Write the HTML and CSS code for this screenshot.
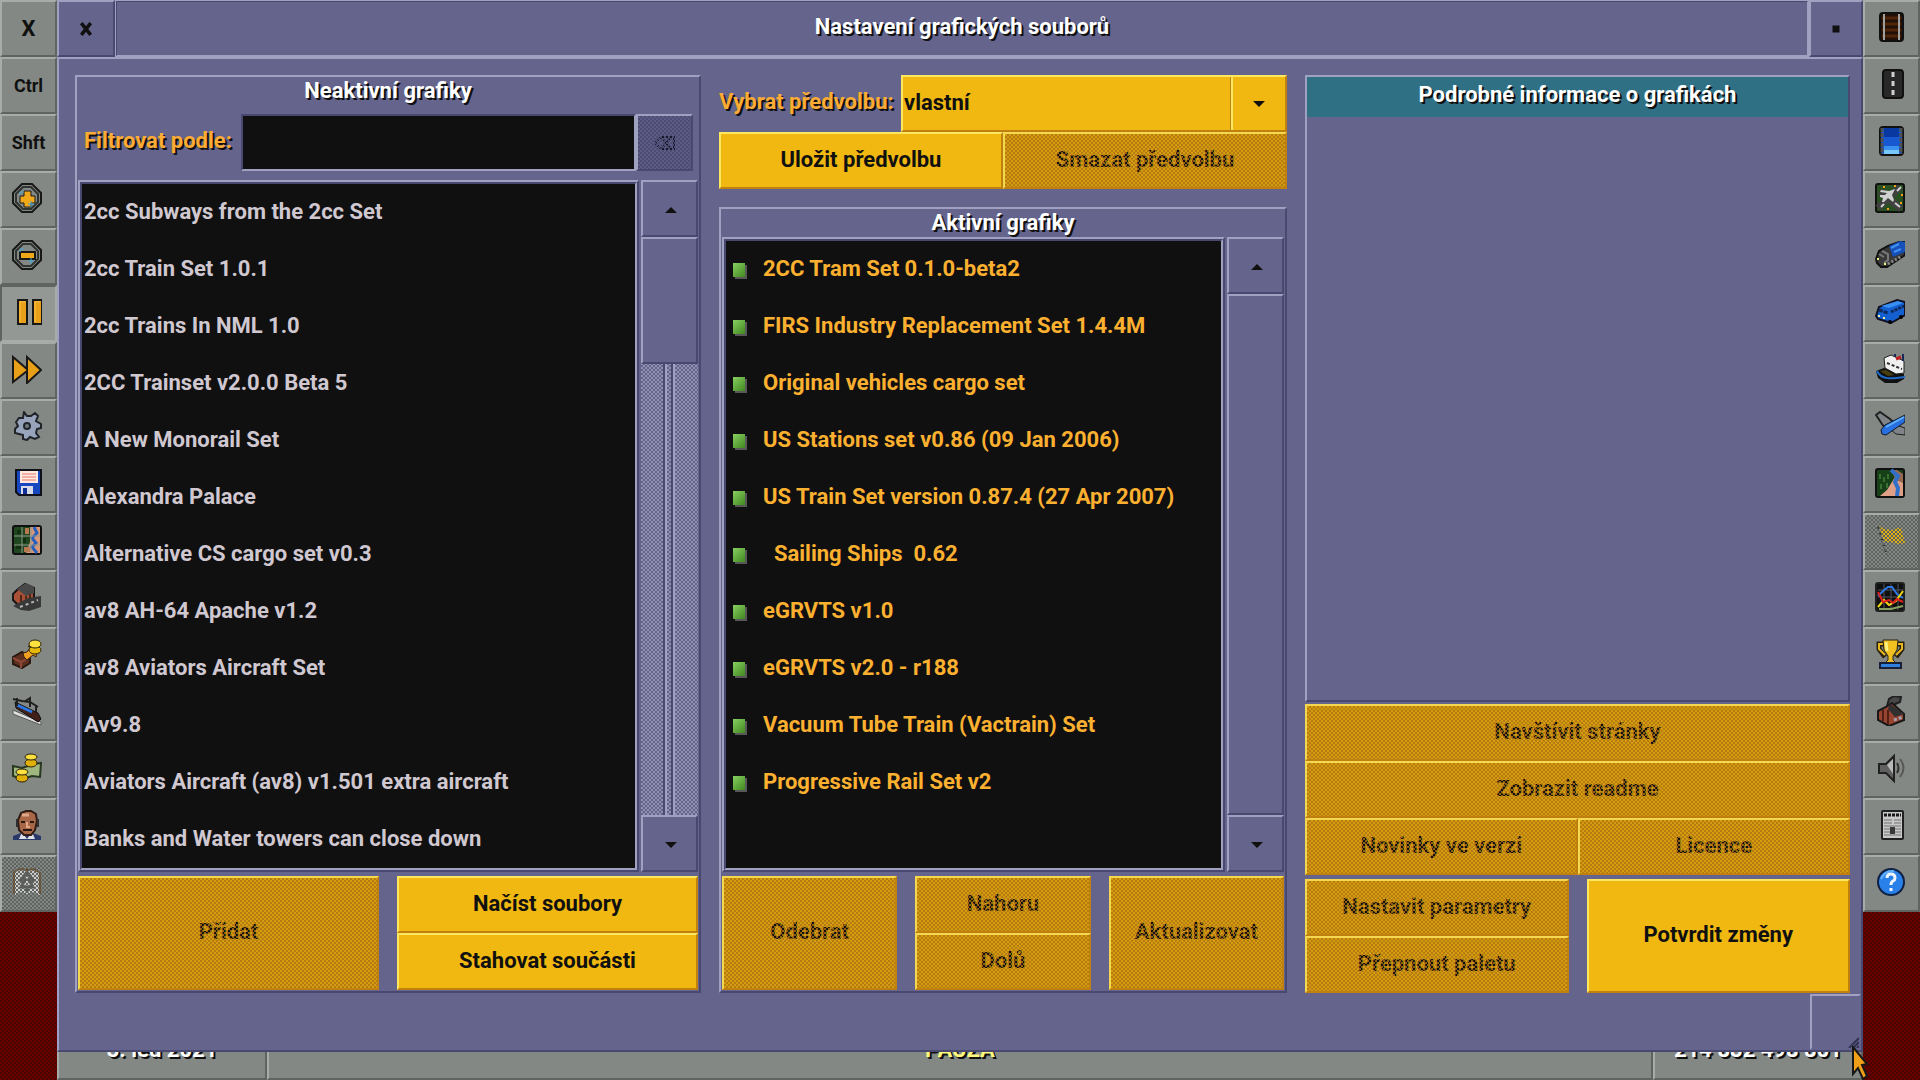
FILE: index.html
```html
<!doctype html>
<html lang="cs">
<head>
<meta charset="UTF-8">
<meta name="viewport" content="width=device-width, initial-scale=1">
<title>Nastavení grafických souborů</title>
<link rel="stylesheet" href="styles.css">
</head>

<body>
<div class="screen">

<div class="toolbar left">
<button class="tool big" type="button">X</button>
<button class="tool" type="button">Ctrl</button>
<button class="tool" type="button">Shft</button>
<button class="tool" type="button" aria-label="Přiblížit"><svg viewBox="0 0 30 30"><path d="M10 1h10l9 9v10l-9 9H10l-9-9V10z" fill="#848884" stroke="#181818" stroke-width="2"/><path d="M11 4h8l7 7v8l-7 7h-8l-7-7v-8z" fill="none" stroke="#303430" stroke-width="2"/><path d="M12 8h7v5h4v7h-4v4h-7v-4H8v-7h4z" fill="#f0a818" stroke="#181818" stroke-width="1"/><path d="M8 12V9h4M19 18v6M16 21h6" fill="none" stroke="#48a8d0" stroke-width="1"/></svg></button>
<button class="tool" type="button" aria-label="Oddálit"><svg viewBox="0 0 30 30"><path d="M10 1h10l9 9v10l-9 9H10l-9-9V10z" fill="#848884" stroke="#181818" stroke-width="2"/><path d="M11 4h8l7 7v8l-7 7h-8l-7-7v-8z" fill="none" stroke="#303430" stroke-width="2"/><path d="M8 12h15v7H8z" fill="#f0a818" stroke="#181818" stroke-width="2"/><path d="M8 12V9h4M19 18v6M16 21h6" fill="none" stroke="#48a8d0" stroke-width="1"/></svg></button>
<button class="tool pressed" type="button" aria-label="Pauza"><svg viewBox="0 0 30 30"><path d="M6 3h9v24H6zM21 3h9v24h-9z" fill="#e8a018" stroke="#181818" stroke-width="2"/><path d="M8 5h5M23 5h5M8 5v20M23 5v20" stroke="#f8c048" stroke-width="1"/></svg></button>
<button class="tool" type="button" aria-label="Zrychlit"><svg viewBox="0 0 30 30"><path d="M1 3l14 12V3l14 13-14 13V17L1 28z" fill="#e8a018" stroke="#181818" stroke-width="2"/></svg></button>
<button class="tool" type="button" aria-label="Nastavení"><svg viewBox="0 0 30 30"><path d="M12 1l3 4 4 0 4-3 3 3-2 5 5 3v4l-4 1-1 4 3 4-4 2-5-2-3 3-4-1v-4l-4-1-4-1v-4l3-3-2-4 3-4 4 0z" fill="#98a4bc" stroke="#202428" stroke-width="2"/><circle cx="15" cy="15" r="3" fill="#707880" stroke="#202428" stroke-width="2"/></svg></button>
<button class="tool" type="button" aria-label="Uložit"><svg viewBox="0 0 30 30"><path d="M5 2h24v25H7l-3-3V2z" fill="#1848c0" stroke="#101018" stroke-width="2"/><path d="M8 3h18v12H8z" fill="#fce8e0"/><path d="M10 6h14M10 9h14M10 12h14" stroke="#e87868" stroke-width="1"/><path d="M9 18h12v8H9z" fill="#d8dce8"/><path d="M11 20h4v6h-4z" fill="#103098"/></svg></button>
<button class="tool" type="button" aria-label="Mapa"><svg viewBox="0 0 30 30"><rect x="1" y="1" width="28" height="28" rx="2" fill="#204820" stroke="#101010" stroke-width="2"/><path d="M14 28l4-11V2h10v26z" fill="#d89878"/><path d="M22 2l3 6-5 5 4 5-4 4 5 6" fill="none" stroke="#2860c0" stroke-width="3"/><path d="M13 3h4v6h-4zM12 22h6v5h-6z" fill="#b87850"/><path d="M5 5h4v4H5zM10 13h4v5h-4zM4 20h6v4H4z" fill="#103010"/><path d="M2 11h26M2 20h26M10 2v26M19 2v26" stroke="#90988c" stroke-width="1"/></svg></button>
<button class="tool" type="button" aria-label="Města"><svg viewBox="0 0 30 30"><path d="M1 12l5-5 7-5 9 4v11L6 23l-5-5z" fill="#a85038" stroke="#181818" stroke-width="2"/><path d="M5 7l9-6 8 4v6l-8 3z" fill="#484848"/><path d="M9 13v7M14 14v3M18 12v4" stroke="#502818" stroke-width="2"/><path d="M1 24l15-8 13-2v11l-12 4-8-1z" fill="#383838"/><path d="M8 25l18-7" stroke="#b8b8b8" stroke-width="2" stroke-dasharray="3 3"/></svg></button>
<button class="tool" type="button" aria-label="Dotace"><svg viewBox="0 0 30 30"><path d="M1 18l9-5 8 5v6l-8 5-9-4z" fill="#603020" stroke="#281810" stroke-width="2"/><path d="M1 19l8 4 9-5M9 23v6" fill="none" stroke="#904838" stroke-width="2"/><path d="M11 14l4-1 3-4-2-2 9 2-1 9-3-2-6 5-3-3z" fill="#f0a020" stroke="#302010"/><ellipse cx="23" cy="11" rx="6" ry="4" fill="#e8b808" stroke="#282008"/><ellipse cx="23" cy="5" rx="6" ry="4" fill="#fce040" stroke="#282008"/></svg></button>
<button class="tool" type="button" aria-label="Stanice"><svg viewBox="0 0 30 30"><path d="M1 14l28 12v3L1 18z" fill="#e0e0e0" stroke="#585858"/><path d="M3 6l23 11 3 6-3 3L4 12z" fill="#402018" stroke="#101010"/><path d="M5 9l15 7" stroke="#2878e8" stroke-width="3"/><path d="M1 3l9 2 8 1 8 5M5 2v8M12 6l6-4v9M24 9v7" fill="none" stroke="#202020" stroke-width="2"/></svg></button>
<button class="tool" type="button" aria-label="Finance"><svg viewBox="0 0 30 30"><path d="M1 13l9 2 12-4 7-1-1 14-8-1-10 3-9-3z" fill="#a0b880" stroke="#283820" stroke-width="2"/><ellipse cx="19" cy="10" rx="6" ry="4" fill="#e0b008" stroke="#282008"/><ellipse cx="19" cy="4" rx="6" ry="3" fill="#fce040" stroke="#282008"/><ellipse cx="10" cy="25" rx="6" ry="4" fill="#e0b008" stroke="#282008"/><ellipse cx="10" cy="19" rx="6" ry="3" fill="#fce040" stroke="#282008"/></svg></button>
<button class="tool" type="button" aria-label="Společnost"><svg viewBox="0 0 30 30"><path d="M1 30v-4l8-3h12l8 3v4z" fill="#283868"/><path d="M10 22l5 7 5-7 3 7H7z" fill="#e0e0e8"/><path d="M6 10l3-7 5-2h5l5 3 1 7-2 9-4 5h-7l-5-5z" fill="#a86848" stroke="#301c14" stroke-width="2"/><path d="M10 5h7" stroke="#e0a888" stroke-width="3"/><path d="M15 12v5h3" fill="none" stroke="#e0a888" stroke-width="2"/><path d="M9 12h4M18 12h4M11 20h9" stroke="#281810" stroke-width="2"/><path d="M5 9v8M26 9v8" stroke="#303030" stroke-width="2"/></svg></button>
<button class="tool" type="button" disabled aria-label="Příběh"><svg viewBox="0 0 30 30"><path d="M3 28V5l7-3 5 1 7-1 6 4v22l-7-3-6 2-6-2z" fill="#d0d0d0"/><path d="M2 27V5l5-3 8 1 7-1 6 4v21" fill="none" stroke="#704820" stroke-width="2"/><path d="M15 5l-6 8h4l-4 7h6M15 5l6 8h-4l4 7h-6v6" stroke="#585858" stroke-width="3" fill="none"/></svg></button>
</div>

<div class="stage">
<div class="window">
<div class="titlebar">
<button class="winbtn close" type="button" aria-label="Zavřít"><svg viewBox="0 0 12 12"><path d="M2 1l8 10M10 1L2 11" stroke="#101010" stroke-width="3"/></svg></button>
<h1 class="caption">Nastavení grafických souborů</h1>
<button class="winbtn stick" type="button" aria-label="Velikost"><svg viewBox="0 0 12 12"><path d="M3 3h6v6H3z" fill="#101010"/></svg></button>
</div>

<div class="content">
<div class="columns">

<section class="panel">
<h2>Neaktivní grafiky</h2>
<div class="filter">
<label for="filter">Filtrovat podle:</label>
<input type="text" id="filter" name="filter">
<button class="clear" type="button" disabled aria-label="Smazat filtr"><svg viewBox="0 0 22 14"><path d="M7 1h13v12H7L1 7zM8 2l9 10M17 2L8 12" fill="none" stroke="#181828" stroke-width="2"/></svg></button>
</div>
<div class="listrow">
<div class="matrix">
<ul class="list inactive">
<li>2cc Subways from the 2cc Set</li>
<li>2cc Train Set 1.0.1</li>
<li>2cc Trains In NML 1.0</li>
<li>2CC Trainset v2.0.0 Beta 5</li>
<li>A New Monorail Set</li>
<li>Alexandra Palace</li>
<li>Alternative CS cargo set v0.3</li>
<li>av8 AH-64 Apache v1.2</li>
<li>av8 Aviators Aircraft Set</li>
<li>Av9.8</li>
<li>Aviators Aircraft (av8) v1.501 extra aircraft</li>
<li>Banks and Water towers can close down</li>
</ul>
</div>
<div class="scrollbar">
<button class="arrow" type="button" aria-label="Nahoru"><svg viewBox="0 0 12 6"><path d="M6 0l6 6H0z"/></svg></button>
<div class="track"><div class="thumb part"></div></div>
<button class="arrow" type="button" aria-label="Dolů"><svg viewBox="0 0 12 6"><path d="M0 0h12L6 6z"/></svg></button>
</div>
</div>
<div class="actions">
<button class="btn" type="button" disabled>Přidat</button>
<div class="stack">
<button class="btn" type="button">Načíst soubory</button>
<button class="btn" type="button">Stahovat součásti</button>
</div>
</div>
</section>

<div class="middle">
<div class="preset">
<label for="preset">Vybrat předvolbu:</label>
<div class="combo">
<select id="preset" name="preset"><option>vlastní</option></select>
<svg viewBox="0 0 12 6"><path d="M0 0h12L6 6z"/></svg>
</div>
</div>
<div class="pair">
<button class="btn" type="button">Uložit předvolbu</button>
<button class="btn" type="button" disabled>Smazat předvolbu</button>
</div>
<section class="panel">
<h2>Aktivní grafiky</h2>
<div class="listrow">
<div class="matrix">
<ul class="list active">
<li>2CC Tram Set 0.1.0-beta2</li>
<li>FIRS Industry Replacement Set 1.4.4M</li>
<li>Original vehicles cargo set</li>
<li>US Stations set v0.86 (09 Jan 2006)</li>
<li>US Train Set version 0.87.4 (27 Apr 2007)</li>
<li>&nbsp; Sailing Ships&nbsp; 0.62</li>
<li>eGRVTS v1.0</li>
<li>eGRVTS v2.0 - r188</li>
<li>Vacuum Tube Train (Vactrain) Set</li>
<li>Progressive Rail Set v2</li>
</ul>
</div>
<div class="scrollbar">
<button class="arrow" type="button" aria-label="Nahoru"><svg viewBox="0 0 12 6"><path d="M6 0l6 6H0z"/></svg></button>
<div class="track"><div class="thumb"></div></div>
<button class="arrow" type="button" aria-label="Dolů"><svg viewBox="0 0 12 6"><path d="M0 0h12L6 6z"/></svg></button>
</div>
</div>
<div class="actions">
<button class="btn" type="button" disabled>Odebrat</button>
<div class="stack">
<button class="btn" type="button" disabled>Nahoru</button>
<button class="btn" type="button" disabled>Dolů</button>
</div>
<button class="btn" type="button" disabled>Aktualizovat</button>
</div>
</section>
</div>

<div class="details">
<section class="info">
<h2>Podrobné informace o grafikách</h2>
</section>
<div class="links">
<button class="btn" type="button" disabled>Navštívit stránky</button>
<button class="btn" type="button" disabled>Zobrazit readme</button>
<div class="pair">
<button class="btn" type="button" disabled>Novinky ve verzi</button>
<button class="btn" type="button" disabled>Licence</button>
</div>
</div>
<div class="actions">
<div class="stack">
<button class="btn" type="button" disabled>Nastavit parametry</button>
<button class="btn" type="button" disabled>Přepnout paletu</button>
</div>
<button class="btn" type="button">Potvrdit změny</button>
</div>
</div>

</div>
<div class="bottom"><div class="resize"><svg viewBox="0 0 12 12"><path d="M2 12L12 2M6 12l6-6M10 12l2-2" stroke="#303050" stroke-width="2"/></svg></div></div>
</div>
</div>

<div class="statusbar">
<div class="date">3. led 2021</div>
<div class="news">PAUZA</div>
<div class="money">214 832 498 801</div>
</div>
</div>

<div class="toolbar right">
<button class="tool" type="button" aria-label="Železnice"><svg viewBox="0 0 30 30"><rect x="5" y="1" width="23" height="28" rx="3" fill="#201008" stroke="#101010" stroke-width="2"/><path d="M7 6h19M7 12h19M7 18h19M7 24h19" stroke="#502408" stroke-width="3"/><path d="M9 2v26M24 2v26" stroke="#a0a0a0" stroke-width="2"/></svg></button>
<button class="tool" type="button" aria-label="Silnice"><svg viewBox="0 0 30 30"><rect x="8" y="1" width="20" height="28" rx="3" fill="#282828" stroke="#101010" stroke-width="2"/><path d="M18 3v25" stroke="#d0d0d0" stroke-width="3" stroke-dasharray="5 4"/></svg></button>
<button class="tool" type="button" aria-label="Voda"><svg viewBox="0 0 30 30"><rect x="5" y="1" width="23" height="28" rx="3" fill="#1858d0" stroke="#101010" stroke-width="2"/><path d="M9 2h15v9H9z" fill="#0838a0"/><path d="M9 20h15v4H9z" fill="#3890f0"/><path d="M9 24h15v4H9z" fill="#78c8fc"/><path d="M7 2v26M26 2v26" stroke="#505050" stroke-width="3" stroke-dasharray="4 1"/></svg></button>
<button class="tool" type="button" aria-label="Letiště"><svg viewBox="0 0 30 30"><rect x="1" y="1" width="28" height="28" rx="2" fill="#285020" stroke="#101010" stroke-width="2"/><path d="M3 25L25 4M5 8l21 18" stroke="#404040" stroke-width="7"/><path d="M6 24l3-3M22 8l4-4M20 20l5 4" stroke="#d0d0d0" stroke-width="2"/><path d="M20 6l-3 6 2 5-1 2-5-4-4 4H7l1-4-3-1v-2l5 0 2-2-7-1 1-2 8 1z" fill="#d0d0d0"/><path d="M8 4h2M19 3h2M26 12h2M12 26h2M25 20h2" stroke="#f0a018" stroke-width="2"/></svg></button>
<button class="tool" type="button" aria-label="Vlaky"><svg viewBox="0 0 30 30"><path d="M1 19l3-8 9-5 11-4 6 0v13l-12 8-6 4-6 0-4-4z" fill="#383838" stroke="#101010" stroke-width="2"/><path d="M14 6l11-5 5 1v10l-12 5z" fill="#1450b8"/><path d="M16 8l8-4M19 12l7-3" stroke="#4090f0" stroke-width="2"/><path d="M7 11l6 3v6l-4 3M4 14l5 3" fill="none" stroke="#787878" stroke-width="2"/><path d="M13 24l14-8" stroke="#888" stroke-width="3" stroke-dasharray="2 2"/><path d="M2 19h2M9 24h2" stroke="#f0f080" stroke-width="2"/></svg></button>
<button class="tool" type="button" aria-label="Auta"><svg viewBox="0 0 30 30"><path d="M1 19l3-9L22 3l8 2v13l-14 8-13-4z" fill="#1460d0" stroke="#101020" stroke-width="2"/><path d="M6 9l17-5 5 2-14 5z" fill="#3890f4"/><path d="M4 13l9 3" stroke="#102858" stroke-width="3" stroke-dasharray="4 1"/><path d="M16 15l13-6" stroke="#102858" stroke-width="3" stroke-dasharray="3 1"/><circle cx="15" cy="25" r="2"/><circle cx="26" cy="20" r="2"/><path d="M3 19h2M8 21h2" stroke="#f0f0a0" stroke-width="2"/></svg></button>
<button class="tool" type="button" aria-label="Lodě"><svg viewBox="0 0 30 30"><path d="M1 17l8-3 20 6v5l-7 4H10l-7-5z" fill="#101010"/><path d="M2 17c4 9 14 8 28 6" fill="none" stroke="#2068c8" stroke-width="2"/><path d="M5 17l6-1 8 5-6 1z" fill="#484010"/><path d="M9 4l7-3 13 6v12l-8 1-11-6z" fill="#f0f0f0" stroke="#202020"/><path d="M12 9l15 6" stroke="#303030" stroke-width="2" stroke-dasharray="3 2"/><path d="M21 5l5-2" fill="none" stroke="#c02020" stroke-width="3"/><path d="M28 0v7M20 0v3" stroke="#182858" stroke-width="2"/></svg></button>
<button class="tool" type="button" aria-label="Letadla"><svg viewBox="0 0 30 30"><path d="M1 4l4-3 10 7 4 4-8 6-4-5z" fill="#808488" stroke="#202020" stroke-width="2"/><path d="M15 18l6-4 9 3v7l-9-1z" fill="#808488" stroke="#202020"/><path d="M30 4v7L11 24l-4-1-1-4 4-5z" fill="#2870e0" stroke="#101828"/><path d="M11 16L29 6" stroke="#60b0fc" stroke-width="2"/></svg></button>
<button class="tool" type="button" aria-label="Krajina"><svg viewBox="0 0 30 30"><rect x="1" y="1" width="28" height="28" rx="2" fill="#184018" stroke="#101010" stroke-width="2"/><path d="M5 28l7-6 8-13 8 6v13z" fill="#e0a088"/><path d="M16 2h6l6 4v9l-7-3z" fill="#986850"/><path d="M16 2l7 6-3 6 3 6-1 8" fill="none" stroke="#3070c8" stroke-width="4"/><path d="M5 6v5M9 9v5M13 6v5M6 16v5M12 15v5" stroke="#387030" stroke-width="2"/></svg></button>
<button class="tool" type="button" disabled aria-label="Cíle"><svg viewBox="0 0 30 30"><path d="M4 1l6 3 7 1 9-3 4 16-8 1-6-2-7 0z" fill="#e0b010"/><path d="M3 1l9 29" stroke="#282828" stroke-width="2" stroke-dasharray="3 3"/></svg></button>
<button class="tool" type="button" aria-label="Grafy"><svg viewBox="0 0 30 30"><rect x="1" y="1" width="28" height="28" rx="2" fill="#101010" stroke="#202020" stroke-width="2"/><path d="M3 8h25M3 15h25M9 2v26M16 2v26M23 2v26" stroke="#505460"/><path d="M3 14l5-5 5-4h4l5 7 6 4" fill="none" stroke="#3078e0" stroke-width="2"/><path d="M3 25l6-7 5 5 7-4 7-10" fill="none" stroke="#f0d810" stroke-width="2"/><path d="M3 10l5 10 6-2 4 3 4-4 6 3" fill="none" stroke="#e02020" stroke-width="2"/><path d="M4 27h12l12-3" fill="none" stroke="#88a060" stroke-width="2"/></svg></button>
<button class="tool" type="button" aria-label="Žebříček"><svg viewBox="0 0 30 30"><path d="M8 5H4v5l6 8M23 5h4v5l-6 8" fill="none" stroke="#282010" stroke-width="5"/><path d="M8 5H4v5l6 6M23 5h4v5l-6 6" fill="none" stroke="#e8b820" stroke-width="2"/><path d="M8 1h15l-1 10-4 6v4l3 3H10l3-3v-4l-4-6z" fill="#f0c020" stroke="#282010" stroke-width="1"/><path d="M11 3l1 9" stroke="#fcf080" stroke-width="3"/><path d="M5 24h21v5H5z" fill="#3080e0" stroke="#182038" stroke-width="2"/></svg></button>
<button class="tool" type="button" aria-label="Průmysl"><svg viewBox="0 0 30 30"><path d="M12 10l2-7 5-3 7 1-1 5-7 3v6" fill="#484848" stroke="#202020" stroke-width="2"/><path d="M3 15l8-4 6-4 12 11v6l-15 6-11-6z" fill="#984430" stroke="#181818" stroke-width="2"/><path d="M15 8l14 10-9 3-7-8z" fill="#303030"/><path d="M13 14v14M8 14v11" stroke="#502014" stroke-width="2"/><path d="M19 24l9-3" stroke="#a0a0b0" stroke-width="3" stroke-dasharray="3 2"/></svg></button>
<button class="tool" type="button" aria-label="Zvuk"><svg viewBox="0 0 30 30"><path d="M4 11h7l8-8v25l-8-8H4z" fill="#606060" stroke="#202020" stroke-width="2"/><path d="M12 12l6-6v15" fill="#b8b8b8"/><path d="M22 10q3 5 0 10" fill="none" stroke="#303030" stroke-width="2"/><path d="M25 6q7 9 0 18" fill="none" stroke="#585858" stroke-width="2"/></svg></button>
<button class="tool" type="button" aria-label="Noviny"><svg viewBox="0 0 30 30"><rect x="7" y="1" width="21" height="28" rx="1" fill="#c8c8c8" stroke="#202020" stroke-width="2"/><path d="M9 5h17" stroke="#181818" stroke-width="3" stroke-dasharray="3 1"/><path d="M9 10h8M19 10h7M9 13h8M19 13h7M9 16h17M9 19h6M20 19h6M9 22h6M20 22h6M9 25h17" stroke="#707070"/><path d="M15 17h5v7h-5z" fill="#383838"/></svg></button>
<button class="tool" type="button" aria-label="Nápověda"><svg viewBox="0 0 30 30"><circle cx="16" cy="15" r="13" fill="#2880e8" stroke="#102040" stroke-width="2"/><path d="M6 12q4-9 13-8" fill="none" stroke="#60b0fc" stroke-width="2"/><path d="M12 11q0-4 4-4t4 4q0 2-2 3t-2 4M16 21v3" fill="none" stroke="#f0f4fc" stroke-width="3"/></svg></button>
</div>

<svg class="cursor" viewBox="0 0 18 34"><path d="M1 1l14 17-5 1 5 11-4 3-5-11-5 6z" fill="#f0a018" stroke="#181818" stroke-width="2"/></svg>
</div>
</body>
</html>
```
FILE: styles.css
```css
:root{
	--base:#64648c; --light:#a0a0c0; --dark:#484870;
	--gold:#f0b810; --goldlight:#fce860; --golddark:#c08010;
	--gray:#848884; --graylight:#a8aca8; --graydark:#606460;
	--black:#101010; --row:57px;
}
*{box-sizing:border-box;}
body{margin:0; background:#580000; font-family:Roboto, "Liberation Sans", sans-serif; font-size:22px; font-weight:700; line-height:28px; color:var(--black);}
button, input, select{font:inherit; color:inherit; margin:0; padding:0; border-radius:0;}
h1, h2{margin:0; font-size:inherit; font-weight:inherit; text-align:center; color:#fff; text-shadow:2px 2px 0 var(--black);}
label{color:#fcac34; text-shadow:2px 2px 0 var(--black);}
svg{display:block;}

.screen{position:relative; display:grid; grid-template-columns:var(--row) minmax(0,1fr) var(--row); min-height:100vh; overflow:hidden; background:repeating-conic-gradient(#680000 0 25%, #4c0000 0 50%) 0 0/4px 4px;}

/* side toolbars */
.toolbar{display:flex; flex-direction:column;}
.tool{display:flex; align-items:center; justify-content:center; height:var(--row); background:var(--gray); border:2px solid; border-color:var(--graylight) var(--graydark) var(--graydark) var(--graylight); font-size:18px;}
.tool.big{font-size:22px;}
.tool svg{width:30px; height:30px; margin:0 3px 3px 0;}
.tool.pressed{background:#949894; border-color:var(--graydark) var(--graylight) var(--graylight) var(--graydark);}

/* checkerboard over anything disabled */
button:disabled{position:relative;}
button:disabled::after{content:""; position:absolute; inset:0; background:repeating-conic-gradient(var(--dither) 0 25%, transparent 0 50%) 0 0/4px 4px;}
.tool:disabled{--dither:#606460;}
.btn:disabled{--dither:rgba(176,116,16,.8); background:#d49c10; border-color:#f4d850 var(--golddark) var(--golddark) #f4d850;}
.clear:disabled{--dither:#4c4c74;}

/* window */
.stage{display:flex; flex-direction:column;}
.window{position:relative; z-index:1; flex:1; display:flex; flex-direction:column; margin-bottom:-29px; background:var(--base);}
.titlebar{display:flex; height:var(--row);}
.winbtn{display:flex; align-items:center; justify-content:center; width:58px; background:var(--base); border:2px solid; border-color:var(--light) var(--dark) var(--dark) var(--light);}
.winbtn svg{width:14px; height:14px;}
.stick{width:54px;}
.caption{flex:1; border:2px solid; border-color:var(--dark) var(--light) var(--light) var(--dark); outline:1px solid var(--light); outline-offset:-1px; line-height:50px;}
.content{flex:1; display:flex; flex-direction:column; border:2px solid; border-color:var(--light) var(--dark) var(--dark) var(--light); padding:16px 0 0 16px;}
.columns{flex:1; display:grid; grid-template-columns:626fr 568fr 545fr; gap:18px; padding-right:11px;}
.bottom{display:flex; justify-content:flex-end; align-items:flex-end; height:57px;}
.resize{display:flex; align-items:flex-end; justify-content:flex-end; width:51px; height:56px; border:2px solid; border-color:var(--light) transparent transparent var(--light);}
.resize svg{width:12px; height:12px;}

.panel{display:flex; flex-direction:column; border:2px solid; border-color:var(--light) var(--dark) var(--dark) var(--light); padding:0 1px 1px;}
.filter{display:flex; align-items:center; height:57px; margin:9px 5px 9px 6px;}
.filter label{width:157px; padding-bottom:3px;}
.filter input{flex:1; min-width:0; height:100%; padding:0 4px; background:var(--black); color:#fcfcfc; border:2px solid; border-color:var(--dark) var(--light) var(--light) var(--dark);}
.clear{display:flex; align-items:center; justify-content:center; width:57px; height:100%; background:#5c5c84; border:2px solid; border-color:var(--light) var(--dark) var(--dark) var(--light);}
.clear svg{width:22px; height:14px;}

.listrow{flex:1; display:flex; gap:2px;}
.matrix{flex:1; display:flex; border:2px solid; border-color:var(--light) var(--dark) var(--dark) var(--light);}
.list{flex:1; margin:0; padding:0; list-style:none; background:var(--black); border:2px solid; border-color:var(--dark) var(--light) var(--light) var(--dark);}
.list li{display:flex; align-items:center; height:var(--row); padding:0 2px 2px; white-space:pre;}
.inactive{color:#d0c8d0;}
.active{color:#fcb030;}
.active li::before{content:""; width:12px; height:14px; margin:2px 18px 0 5px; background:linear-gradient(135deg,#88d060,#408820); box-shadow:2px 2px 0 #585858;}

.scrollbar{display:flex; flex-direction:column; width:57px;}
.arrow, .thumb{background:var(--base); border:2px solid; border-color:var(--light) var(--dark) var(--dark) var(--light);}
.arrow{display:flex; align-items:center; justify-content:center; height:var(--row);}
.arrow svg, .combo svg{width:12px; height:6px; fill:var(--black);}
.arrow svg{margin:2px 0 0 2px;}
.track{flex:1; display:flex; flex-direction:column; background:linear-gradient(90deg,transparent 22px,var(--dark) 22px 24px,var(--light) 24px 26px,transparent 26px 30px,var(--dark) 30px 32px,var(--light) 32px 34px,transparent 34px), repeating-conic-gradient(#9090b0 0 25%, #64648c 0 50%) 0 0/4px 4px;}
.thumb{flex:1;}
.thumb.part{flex:0 0 22%;}

/* gold buttons */
.btn{flex:1 0 auto; min-width:0; min-height:var(--row); padding-bottom:2px; background:var(--gold); border:2px solid; border-color:var(--goldlight) var(--golddark) var(--golddark) var(--goldlight);}
.actions, .pair{display:grid; grid-auto-flow:column; grid-auto-columns:minmax(0,1fr);}
.actions{gap:18px; margin-top:4px;}
.stack{display:flex; flex-direction:column;}

.middle, .details{display:flex; flex-direction:column;}
.middle .panel{flex:1; margin-top:18px;}
.preset{display:flex; align-items:center;}
.preset label{width:182px; padding-bottom:4px;}
.combo{position:relative; flex:1; height:var(--row);}
.combo select{width:100%; height:100%; padding:0 0 2px 1px; appearance:none; border:2px solid; border-color:var(--goldlight) var(--golddark) var(--golddark) var(--goldlight); background:linear-gradient(90deg,var(--golddark) 1px,var(--goldlight) 1px 3px,transparent 3px) right/55px 100% no-repeat var(--gold);}
.combo svg{position:absolute; right:22px; top:26px;}

.info{flex:1; border:2px solid; border-color:var(--light) var(--dark) var(--dark) var(--light);}
.info h2{background:#307084; line-height:35px; padding-bottom:5px;}
.links{display:flex; flex-direction:column; margin-top:2px;}

/* status bar, half hidden behind the window */
.statusbar{display:flex; height:57px; color:#fff; text-align:center; line-height:50px; text-shadow:2px 2px 0 var(--black);}
.statusbar div{background:var(--gray); border:2px solid; border-color:var(--graylight) var(--graydark) var(--graydark) var(--graylight);}
.date{width:210px;}
.news{flex:1; color:#fcf880;}
.money{width:210px;}

.cursor{position:absolute; z-index:2; right:50px; bottom:0; width:18px; height:34px;}
```
